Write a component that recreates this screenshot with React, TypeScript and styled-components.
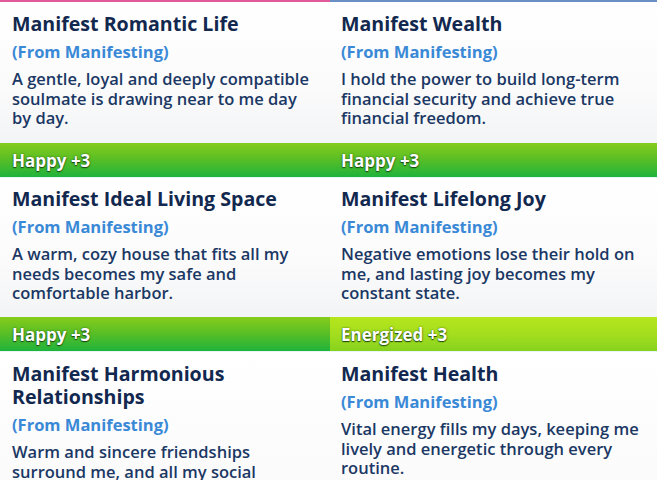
import React from "react";
import styled, { createGlobalStyle } from "styled-components";

const Global = createGlobalStyle`
  html, body { margin: 0; padding: 0; background: #ffffff; }
  body { width: 657px; height: 480px; overflow: hidden; }
  #root { width: 657px; height: 480px; }
`;

const Page = styled.div`
  display: grid;
  grid-template-columns: 330px 327px;
  width: 657px;
  height: 480px;
  overflow: hidden;
  font-family: "Open Sans", "Noto Sans", sans-serif;
`;

const Column = styled.div<{ $accent: string }>`
  display: flex;
  flex-direction: column;
  border-top: 2px solid ${(p) => p.$accent};
`;

const Body = styled.div<{ $h: number; $pad: number; $padR: number; $top: number }>`
  height: ${(p) => p.$h}px;
  box-sizing: border-box;
  padding: ${(p) => p.$top}px ${(p) => p.$padR}px 0 ${(p) => p.$pad}px;
  background: linear-gradient(#ffffff 0%, #fbfbfc 60%, #f3f4f5 100%);
  flex-shrink: 0;
`;

const Title = styled.div`
  font-size: 19.6px;
  font-weight: 700;
  color: #12284f;
  line-height: 23px;
`;

const Sub = styled.div`
  font-size: 16.5px;
  font-weight: 700;
  color: #3a89d6;
  line-height: 20px;
  margin-top: 7px;
`;

const Desc = styled.div`
  font-size: 16.5px;
  font-weight: 600;
  color: #1b3864;
  line-height: 19.5px;
  margin-top: 7px;
`;

const Bar = styled.div<{ $kind: "happy" | "energized"; $pad: number }>`
  height: 34px;
  flex-shrink: 0;
  display: flex;
  align-items: center;
  padding-left: ${(p) => p.$pad}px;
  background: ${(p) =>
    p.$kind === "happy"
      ? "linear-gradient(#86cc1c 0%, #5cbf24 45%, #1fb33c 100%)"
      : "linear-gradient(#b6e61c 0%, #a4de1e 50%, #86d21e 100%)"};
  border-bottom: 1px solid #e6f7f4;
  color: #ffffff;
  font-size: 17px;
  font-weight: 700;
  text-shadow: 0 1px 1px rgba(20, 60, 10, 0.9), 0 0 2px rgba(20, 60, 10, 0.7);
`;

type Item = { title: string; desc: string; bar?: "happy" | "energized"; label?: string };

const left: Item[] = [
  {
    title: "Manifest Romantic Life",
    desc: "A gentle, loyal and deeply compatible soulmate is drawing near to me day by day.",
    bar: "happy",
    label: "Happy +3",
  },
  {
    title: "Manifest Ideal Living Space",
    desc: "A warm, cozy house that fits all my needs becomes my safe and comfortable harbor.",
    bar: "happy",
    label: "Happy +3",
  },
  {
    title: "Manifest Harmonious Relationships",
    desc: "Warm and sincere friendships surround me, and all my social interactions flow with ease.",
  },
];

const right: Item[] = [
  {
    title: "Manifest Wealth",
    desc: "I hold the power to build long-term financial security and achieve true financial freedom.",
    bar: "happy",
    label: "Happy +3",
  },
  {
    title: "Manifest Lifelong Joy",
    desc: "Negative emotions lose their hold on me, and lasting joy becomes my constant state.",
    bar: "energized",
    label: "Energized +3",
  },
  {
    title: "Manifest Health",
    desc: "Vital energy fills my days, keeping me lively and energetic through every routine.",
  },
];

const heights = [141, 139, 200];
const tops = [10, 9, 10];

function Col({
  items,
  accent,
  pad,
  padR,
}: {
  items: Item[];
  accent: string;
  pad: number;
  padR: number;
}) {
  return (
    <Column $accent={accent}>
      {items.map((it, i) => (
        <React.Fragment key={it.title}>
          <Body $h={heights[i]} $top={tops[i]} $pad={pad} $padR={padR}>
            <Title>{it.title}</Title>
            <Sub>(From Manifesting)</Sub>
            <Desc>{it.desc}</Desc>
          </Body>
          {it.bar && (
            <Bar $kind={it.bar} $pad={pad}>
              {it.label}
            </Bar>
          )}
        </React.Fragment>
      ))}
    </Column>
  );
}

export default function App() {
  return (
    <>
      <Global />
      <Page>
        <Col items={left} accent="#e25a9a" pad={12} padR={17} />
        <Col items={right} accent="#6a8fc4" pad={11} padR={6} />
      </Page>
    </>
  );
}
